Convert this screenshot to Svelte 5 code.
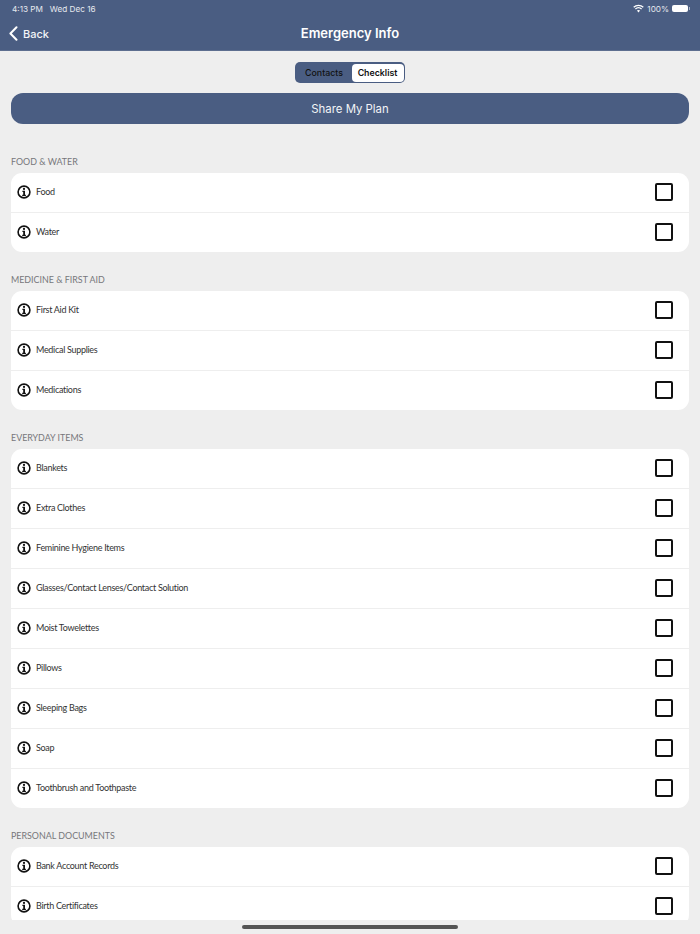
<script>
  const sections = [
    { title: 'FOOD & WATER', items: ['Food', 'Water'] },
    { title: 'MEDICINE & FIRST AID', items: ['First Aid Kit', 'Medical Supplies', 'Medications'] },
    {
      title: 'EVERYDAY ITEMS',
      items: [
        'Blankets',
        'Extra Clothes',
        'Feminine Hygiene Items',
        'Glasses/Contact Lenses/Contact Solution',
        'Moist Towelettes',
        'Pillows',
        'Sleeping Bags',
        'Soap',
        'Toothbrush and Toothpaste'
      ]
    },
    { title: 'PERSONAL DOCUMENTS', items: ['Bank Account Records', 'Birth Certificates'] }
  ];
</script>

<div class="screen">
  <header class="nav">
    <div class="status">
      <span>4:13 PM&nbsp;&nbsp; Wed Dec 16</span>
      <div class="status-right">
        <svg width="11" height="9" viewBox="0 0 11 9" fill="none" stroke="#fff" stroke-width="1.3">
          <path d="M0.7 3.2a7 7 0 0 1 9.6 0" />
          <path d="M2.4 5a4.6 4.6 0 0 1 6.2 0" />
          <path d="M5.5 8.4 L3.9 6.6a2.4 2.4 0 0 1 3.2 0Z" fill="#fff" stroke="none" />
        </svg>
        <span>100%</span>
        <div class="battery"><div class="battery-fill"></div></div>
      </div>
    </div>
    <div class="bar">
      <div class="back">
        <svg width="9" height="15" viewBox="0 0 9 15" fill="none" stroke="#fff" stroke-width="2" stroke-linecap="round" stroke-linejoin="round">
          <path d="M7.5 1.2 1.4 7.5l6.1 6.3" />
        </svg>
        <span>Back</span>
      </div>
      <h1>Emergency Info</h1>
    </div>
  </header>

  <div class="segment">
    <div class="seg-item">Contacts</div>
    <div class="seg-item active">Checklist</div>
  </div>

  <button class="share">Share My Plan</button>

  <div class="list">
    {#each sections as section}
      <h2>{section.title}</h2>
      <div class="card">
        {#each section.items as item}
          <div class="row">
            <svg class="info" width="14" height="14" viewBox="0 0 14 14">
              <circle cx="7" cy="7" r="5.9" fill="none" stroke="#111" stroke-width="1.6" />
              <circle cx="7" cy="3.9" r="1.1" fill="#111" />
              <path d="M5.4 5.8H8V9.7H8.9V11H5.2V9.7H6.2V7.1H5.4Z" fill="#111" />
            </svg>
            <span class="label">{item}</span>
            <div class="check"></div>
          </div>
        {/each}
      </div>
    {/each}
  </div>

  <div class="home"></div>
</div>

<style>
  :global(body) {
    margin: 0;
    background: #eeeeee;
  }

  .screen {
    position: relative;
    width: 700px;
    height: 934px;
    display: flex;
    flex-direction: column;
    overflow: hidden;
    background: #eeeeee;
    font-family: Inter, "Liberation Sans", sans-serif;
  }

  .nav {
    height: 51px;
    flex: none;
    background: #4a5d82;
    color: #fff;
    box-sizing: border-box;
    border-bottom: 1px solid #5d6e8f;
  }

  .status {
    height: 17px;
    padding: 0 12px;
    display: flex;
    align-items: center;
    justify-content: space-between;
    font-size: 8.2px;
    color: #e6e9ef;
  }

  .status-right {
    display: flex;
    align-items: center;
    gap: 3px;
  }

  .battery {
    width: 16px;
    height: 7px;
    border-radius: 2px;
    background: #fff;
    position: relative;
  }

  .battery-fill {
    position: absolute;
    right: -2px;
    top: 2px;
    width: 1px;
    height: 3px;
    background: #a9b3c6;
  }

  .bar {
    height: 32px;
    padding-bottom: 1px;
    position: relative;
    display: flex;
    align-items: center;
    justify-content: center;
  }

  .back {
    position: absolute;
    left: 9px;
    top: 9px;
    display: flex;
    align-items: center;
    gap: 5px;
    font-size: 11px;
    font-weight: 500;
    color: #f2f4f7;
  }

  h1 {
    margin: 0;
    font-size: 13px;
    font-weight: 600;
  }

  .segment {
    flex: none;
    align-self: center;
    margin-top: 11px;
    width: 110px;
    height: 21px;
    box-sizing: border-box;
    display: flex;
    border-radius: 5px;
    background: #4a5d82;
    padding: 1.5px;
  }

  .seg-item {
    flex: 1;
    display: flex;
    align-items: center;
    justify-content: center;
    font-size: 8.8px;
    font-weight: 500;
    color: #111;
    border-radius: 4px;
  }

  .seg-item.active {
    flex: none;
    width: 52px;
    background: #fff;
    font-weight: 600;
  }

  .share {
    flex: none;
    display: block;
    margin: 10px 11px 0;
    height: 31px;
    border: 0;
    border-radius: 12px;
    background: #4a5d82;
    color: #f2f4f7;
    font-family: inherit;
    font-size: 11.4px;
  }

  .list {
    flex: none;
    height: 796px;
    box-sizing: border-box;
    padding: 10px 11px 0;
    overflow: hidden;
  }

  h2 {
    margin: 0;
    padding-top: 22px;
    height: 17px;
    line-height: 12px;
    font-family: Lato, sans-serif;
    font-size: 8.9px;
    font-weight: 400;
    color: #77777b;
  }

  .card {
    background: #fff;
    border-radius: 11px;
    overflow: hidden;
  }

  .row {
    height: 38px;
    padding-bottom: 1px;
    display: flex;
    align-items: center;
    padding-left: 5.5px;
    padding-right: 16px;
    border-top: 1px solid #eeeeee;
  }

  .row:first-child {
    border-top: 0;
  }

  .info {
    flex: none;
  }

  .label {
    flex: 1;
    margin-left: 5.5px;
    padding-bottom: 2px;
    font-family: Lato, sans-serif;
    font-size: 9px;
    letter-spacing: -0.3px;
    color: #333;
  }

  .check {
    flex: none;
    width: 14px;
    height: 14px;
    border: 2.2px solid #111;
    border-radius: 2px;
  }

  .home {
    position: absolute;
    left: 242px;
    top: 925px;
    width: 216px;
    height: 4px;
    border-radius: 2px;
    background: #555;
  }
</style>
